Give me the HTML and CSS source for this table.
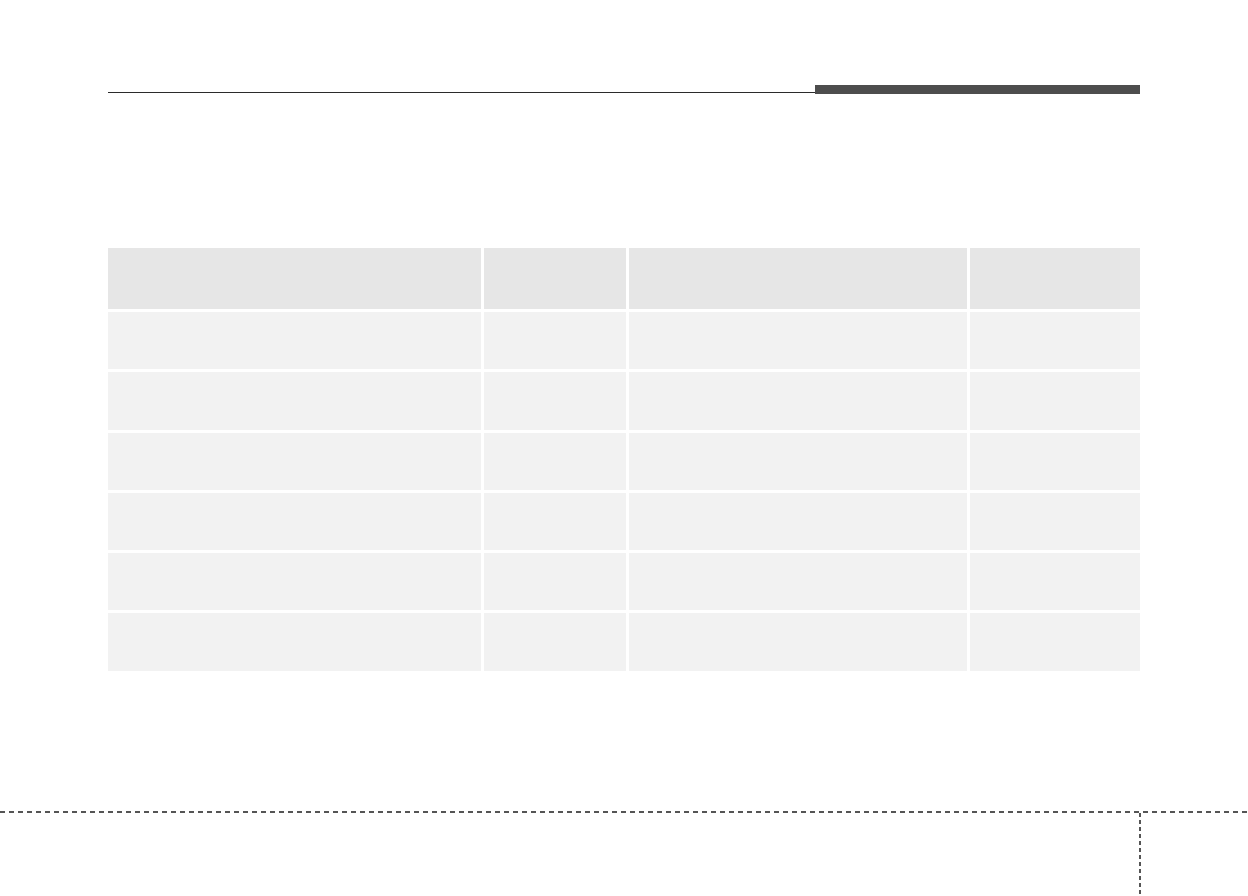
FILE: index.html
```html
<!DOCTYPE html>
<html lang="en">
<head>
    <meta charset="UTF-8">
    <meta name="viewport" content="width=device-width, initial-scale=1.0">
    <title>Page</title>
    <link rel="stylesheet" href="styles.css">
</head>
<body>
    <header class="page-head">
        <div class="head-rule"></div>
        <div class="head-bar"></div>
    </header>

    <div class="spec-table">
        <div class="cell head"></div>
        <div class="cell head"></div>
        <div class="cell head"></div>
        <div class="cell head"></div>

        <div class="cell"></div><div class="cell"></div><div class="cell"></div><div class="cell"></div>
        <div class="cell"></div><div class="cell"></div><div class="cell"></div><div class="cell"></div>
        <div class="cell"></div><div class="cell"></div><div class="cell"></div><div class="cell"></div>
        <div class="cell"></div><div class="cell"></div><div class="cell"></div><div class="cell"></div>
        <div class="cell"></div><div class="cell"></div><div class="cell"></div><div class="cell"></div>
        <div class="cell"></div><div class="cell"></div><div class="cell"></div><div class="cell"></div>
    </div>

    <footer class="page-foot">
        <div class="dash-h"></div>
        <div class="dash-v"></div>
    </footer>
</body>
</html>
```

FILE: styles.css
```css
body {
    margin: 0;
    padding: 0;
    background-color: #ffffff;
    font-family: 'Liberation Sans', Arial, sans-serif;
    width: 1248px;
    height: 896px;
    overflow: hidden;
}

/* top rule with the dark tab on the right */
.page-head {
    display: flex;
    align-items: flex-end;
    margin: 0 108px;
    padding-top: 85px;
}

.head-rule {
    flex: 1;
    height: 1px;
    margin-bottom: 1px;
    background-color: #2b2b2b;
}

.head-bar {
    width: 325px;
    height: 9px;
    background-color: #4d4d4d;
}

.spec-table {
    display: grid;
    grid-template-columns: 373px 142px 338px 170px;
    grid-template-rows: 61px repeat(6, 57.3px);
    gap: 3px;
    margin: 154px 0 0 108px;
    width: 1032px;
}

.cell {
    background-color: #f2f2f2;
}

.cell.head {
    background-color: #e6e6e6;
}

/* dashed trim marks at the bottom */
.page-foot {
    margin-top: 140px;
}

.dash-h {
    height: 2px;
    background: repeating-linear-gradient(to right, #555555 0 5px, transparent 5px 9px);
}

.dash-v {
    width: 2px;
    height: 82px;
    margin-left: 1139px;
    background: repeating-linear-gradient(to bottom, #555555 0 4px, transparent 4px 7px);
}
```
